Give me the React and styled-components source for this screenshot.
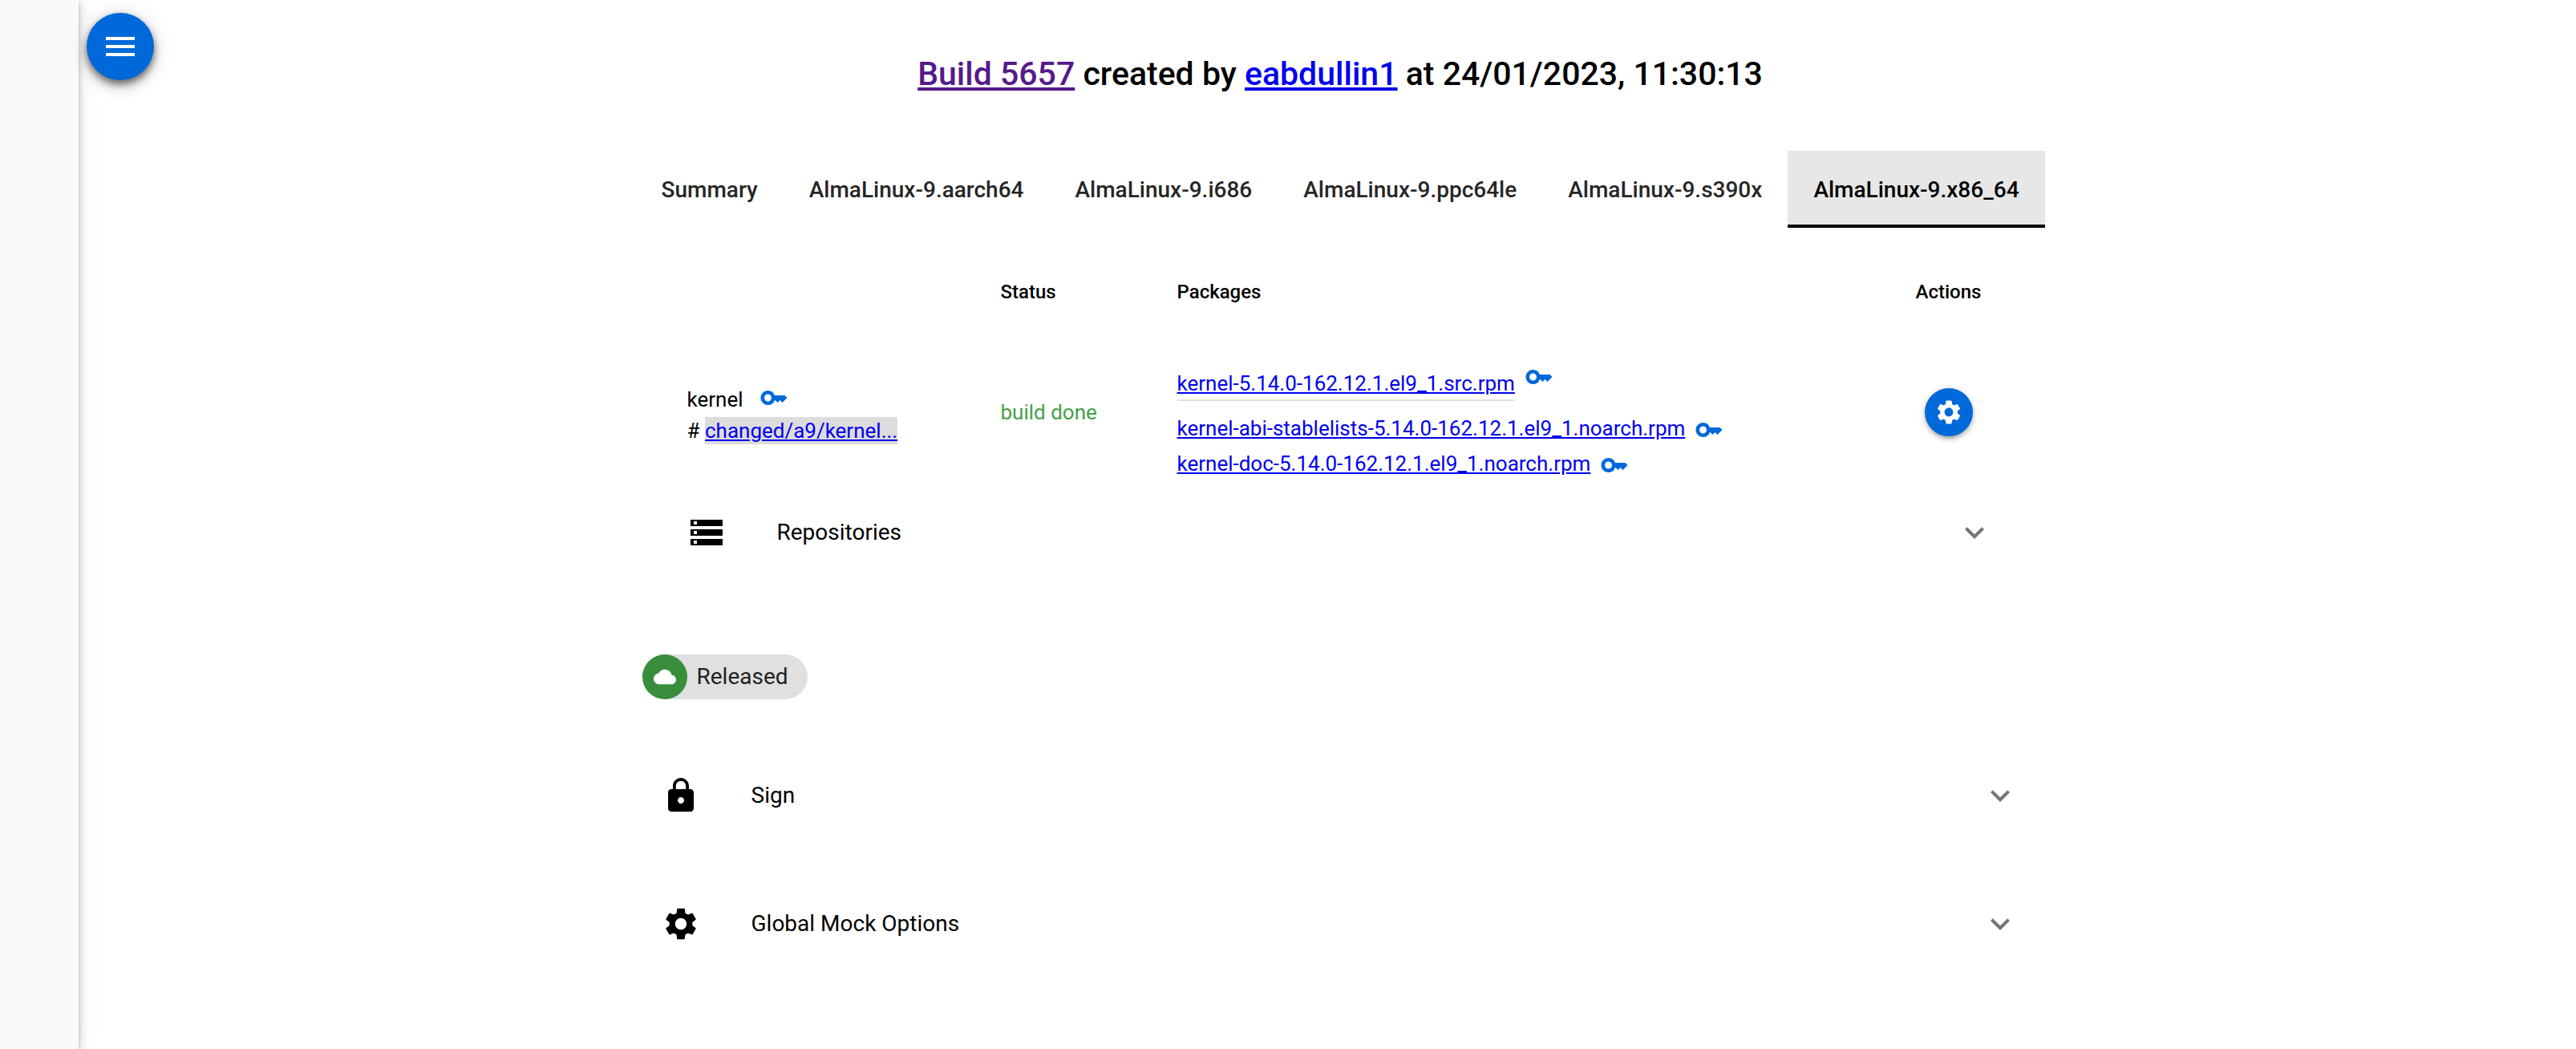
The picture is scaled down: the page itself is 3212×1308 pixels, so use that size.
import React from "react";
import styled, { createGlobalStyle } from "styled-components";
import {
  MdCloud,
  MdKey,
  MdKeyboardArrowDown,
  MdLock,
  MdMenu,
  MdSettings,
  MdStorage,
} from "react-icons/md";

const GlobalStyle = createGlobalStyle`
  *, *::before, *::after { box-sizing: border-box; }
  body {
    margin: 0;
    background: #fff;
    color: #000;
    font-family: Roboto, "Liberation Sans", sans-serif;
    font-size: 28px;
    line-height: 40px;
  }
  button { font: inherit; color: inherit; border: 0; margin: 0; padding: 0; background: none; cursor: pointer; }
  svg { display: block; flex: none; }
`;

const Layout = styled.div`
  display: flex;
  min-height: 100vh;
`;

const Drawer = styled.aside`
  position: relative;
  flex: none;
  width: 98px;
  background: #fafafa;
  box-shadow: 0 2px 10px rgba(0, 0, 0, 0.2), 0 4px 4px rgba(0, 0, 0, 0.14),
    0 2px 28px rgba(0, 0, 0, 0.08);
`;

const RoundButton = styled.button`
  display: flex;
  align-items: center;
  justify-content: center;
  width: ${(p) => p.$size}px;
  height: ${(p) => p.$size}px;
  border-radius: 50%;
  background: #0069d9;
  color: #fff;
  box-shadow: 0 2px 10px rgba(0, 0, 0, 0.2), 0 4px 4px rgba(0, 0, 0, 0.14),
    0 6px 2px -4px rgba(0, 0, 0, 0.12);
`;

const MenuButton = styled(RoundButton)`
  position: absolute;
  top: 16px;
  left: 108px;
  box-shadow: 0 6px 10px -2px rgba(0, 0, 0, 0.2), 0 10px 16px rgba(0, 0, 0, 0.14),
    0 2px 28px rgba(0, 0, 0, 0.12), 0 4px 10px rgba(0, 0, 0, 0.4);
`;

const Main = styled.main`
  flex: 1;
  min-width: 0;
  padding: 60px 0 64px 32px;
`;

const Title = styled.h1`
  margin: 0 0 64px;
  font-size: 41px;
  line-height: 64px;
  font-weight: 500;
  text-align: center;
`;

const Link = styled.a`
  color: ${(p) => (p.$visited ? "#551a8b" : "#0000ee")};
  text-decoration: underline;
`;

const Content = styled.div`
  width: 100%;
  max-width: 1757px;
  margin: 0 auto;
`;

const Tabs = styled.div`
  display: flex;
`;

const Tab = styled.button`
  height: 96px;
  padding: 6px 32px 0;
  font-weight: 500;
  white-space: nowrap;
  color: ${(p) => (p.$active ? "#000" : "#262626")};
  background: ${(p) => (p.$active ? "#e7e7e7" : "transparent")};
  border-bottom: 4px solid ${(p) => (p.$active ? "#000" : "transparent")};
`;

const Panel = styled.section`
  padding: 32px;
`;

const Table = styled.table`
  width: 100%;
  table-layout: fixed;
  border-collapse: collapse;
  font-size: 26px;
`;

const Col = styled.col`
  width: ${(p) => p.$width};
`;

const Th = styled.th`
  height: 96px;
  padding: 0 32px;
  font-size: 24px;
  font-weight: 500;
  text-align: ${(p) => p.$align || "left"};
`;

const Td = styled.td`
  height: 204px;
  padding: 0 32px;
  vertical-align: middle;
  color: ${(p) => p.$color || "inherit"};
`;

const Package = styled.div`
  display: flex;
  align-items: flex-start;
  gap: 20px;
  padding-top: 6px;
`;

const GitRef = styled.div`
  line-height: 38px;
`;

const RefLink = styled(Link)`
  padding: 2px 0;
  background: #dcdcdc;
`;

const KeyIcon = styled(MdKey)`
  color: #0069d9;
`;

const SourceRow = styled.div`
  display: flex;
  align-items: flex-end;
  gap: 12px;
  padding-top: 22px;
`;

const SourceLink = styled(Link)`
  border-bottom: 2px solid #e0e0e0;
`;

const SourceKey = styled.span`
  padding-bottom: 12px;
`;

const RpmList = styled.div`
  display: grid;
  gap: 4px;
  padding-top: 14px;
`;

const RpmRow = styled.div`
  display: flex;
  align-items: flex-end;
  gap: 12px;
`;

const ActionButton = styled(RoundButton)`
  margin: 0 auto;
`;

const ExpansionButton = styled.button`
  display: flex;
  align-items: center;
  width: 100%;
  height: 96px;
  padding: 0 32px;
  text-align: left;
`;

const ExpansionIcon = styled.span`
  width: 112px;
`;

const ExpansionLabel = styled.span`
  flex: 1;
`;

const Chevron = styled(MdKeyboardArrowDown)`
  color: #757575;
`;

const Sections = styled.div`
  display: flex;
  flex-direction: column;
  gap: 64px;
  padding-top: 64px;
`;

const Chip = styled.div`
  display: flex;
  align-items: center;
  align-self: flex-start;
  gap: 12px;
  margin: 8px;
  padding-right: 24px;
  border-radius: 28px;
  background: #e0e0e0;
  color: #212121;
`;

const ChipAvatar = styled.span`
  display: flex;
  align-items: center;
  justify-content: center;
  width: 56px;
  height: 56px;
  border-radius: 50%;
  background: #388e3c;
  color: #fff;
`;

const tabs = [
  "Summary",
  "AlmaLinux-9.aarch64",
  "AlmaLinux-9.i686",
  "AlmaLinux-9.ppc64le",
  "AlmaLinux-9.s390x",
  "AlmaLinux-9.x86_64",
];

const rpms = [
  "kernel-abi-stablelists-5.14.0-162.12.1.el9_1.noarch.rpm",
  "kernel-doc-5.14.0-162.12.1.el9_1.noarch.rpm",
];

function Expansion({ icon: Icon, label }) {
  return (
    <ExpansionButton type="button" aria-expanded="false">
      <ExpansionIcon>
        <Icon size={48} />
      </ExpansionIcon>
      <ExpansionLabel>{label}</ExpansionLabel>
      <Chevron size={48} />
    </ExpansionButton>
  );
}

export default function App() {
  return (
    <>
      <GlobalStyle />
      <Layout>
        <Drawer>
          <MenuButton type="button" aria-label="Menu" $size={84}>
            <MdMenu size={48} />
          </MenuButton>
        </Drawer>
        <Main>
          <Title>
            <Link href="#build" $visited>Build 5657</Link> created by{" "}
            <Link href="#user">eabdullin1</Link> at 24/01/2023, 11:30:13
          </Title>
          <Content>
            <Tabs role="tablist">
              {tabs.map((name, i) => {
                const active = i === tabs.length - 1;
                return (
                  <Tab key={name} type="button" role="tab" aria-selected={active} $active={active}>
                    {name}
                  </Tab>
                );
              })}
            </Tabs>
            <Panel>
              <Table>
                <colgroup>
                  <Col $width="391px" />
                  <Col $width="220px" />
                  <Col $width="auto" />
                  <Col $width="176px" />
                </colgroup>
                <thead>
                  <tr>
                    <Th />
                    <Th>Status</Th>
                    <Th>Packages</Th>
                    <Th $align="center">Actions</Th>
                  </tr>
                </thead>
                <tbody>
                  <tr>
                    <Td>
                      <Package>
                        kernel <KeyIcon size={36} />
                      </Package>
                      <GitRef>
                        # <RefLink href="#ref">changed/a9/kernel...</RefLink>
                      </GitRef>
                    </Td>
                    <Td $color="#43a047">build done</Td>
                    <Td>
                      <SourceRow>
                        <SourceLink href="#src">kernel-5.14.0-162.12.1.el9_1.src.rpm</SourceLink>
                        <SourceKey>
                          <KeyIcon size={36} />
                        </SourceKey>
                      </SourceRow>
                      <RpmList>
                        {rpms.map((name) => (
                          <RpmRow key={name}>
                            <Link href="#rpm">{name}</Link>
                            <KeyIcon size={36} />
                          </RpmRow>
                        ))}
                      </RpmList>
                    </Td>
                    <Td>
                      <ActionButton type="button" aria-label="Actions" $size={60}>
                        <MdSettings size={36} />
                      </ActionButton>
                    </Td>
                  </tr>
                </tbody>
              </Table>
              <Expansion icon={MdStorage} label="Repositories" />
            </Panel>
            <Sections>
              <Chip>
                <ChipAvatar>
                  <MdCloud size={28} />
                </ChipAvatar>
                Released
              </Chip>
              <Expansion icon={MdLock} label="Sign" />
              <Expansion icon={MdSettings} label="Global Mock Options" />
            </Sections>
          </Content>
        </Main>
      </Layout>
    </>
  );
}
